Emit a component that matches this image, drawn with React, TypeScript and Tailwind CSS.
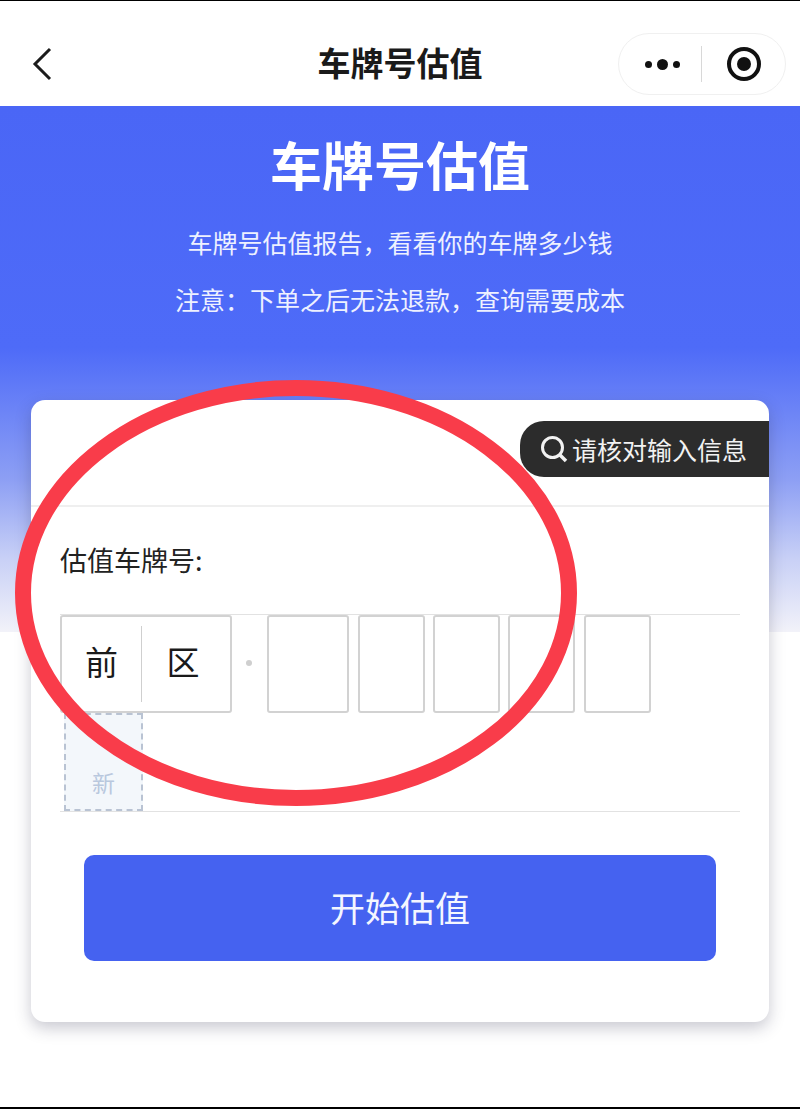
const CJK = "font-['Noto_Sans_CJK_SC','Noto_Sans',sans-serif]";

const PlateBox = ({ width }: { width: string }): JSX.Element => (
  <div className={`h-[98px] shrink-0 rounded-[3px] border-2 border-[#d2d2d2] ${width}`} />
);

const NavBar = (): JSX.Element => (
  <div className="grid h-[105px] shrink-0 grid-cols-[1fr_auto_1fr] items-center bg-white px-[14px] pt-[21px]">
    <svg width="22" height="34" viewBox="0 0 22 34" fill="none" className="ml-[18px]">
      <path d="M18 2 L3 17 L18 32" stroke="#1c1c1c" strokeWidth="3" />
    </svg>
    <h1 className="mb-[3px] text-[33px] font-bold leading-none text-[#1a1a1a]">车牌号估值</h1>
    <div className="flex h-[62px] w-[168px] items-center justify-self-end rounded-full border border-[#f0f0f0] bg-white">
      <div className="flex flex-1 items-center justify-center gap-[5px] pl-1">
        <span className="h-[7px] w-[7px] rounded-full bg-[#111]" />
        <span className="h-[11px] w-[11px] rounded-full bg-[#111]" />
        <span className="h-[7px] w-[7px] rounded-full bg-[#111]" />
      </div>
      <div className="h-[36px] w-px bg-[#d8d8d8]" />
      <div className="flex w-[83px] items-center justify-center">
        <div className="flex h-[34px] w-[34px] items-center justify-center rounded-full border-[4px] border-[#111]">
          <span className="h-[14px] w-[14px] rounded-full bg-[#111]" />
        </div>
      </div>
    </div>
  </div>
);

const Card = (): JSX.Element => (
  <div className="relative mx-[31px] mt-[-232px] flex h-[622px] flex-col rounded-[14px] bg-white shadow-[0_6px_16px_rgba(40,40,70,0.25)]">
    <div className="flex h-[107px] shrink-0 items-start justify-end border-b-2 border-[#efefef] pt-[21px]">
      <div className="flex h-[56px] w-[249px] items-center gap-[4px] rounded-l-[24px] bg-[#2c2c2c] pl-[20px] text-[25px] leading-none text-[#f2f2f2]">
        <svg width="28" height="28" viewBox="0 0 28 28" fill="none">
          <circle cx="12.5" cy="12.5" r="10" stroke="#f2f2f2" strokeWidth="3" />
          <path d="M20 20 L26 26" stroke="#f2f2f2" strokeWidth="3.5" />
        </svg>
        <span>请核对输入信息</span>
      </div>
    </div>
    <div className="mt-[35px] pl-[29px] text-[27px] leading-[36px] text-[#222]">估值车牌号:</div>
    <div className="mx-[29px] mt-[36px] h-[198px] shrink-0 border-y border-[#e2e2e2]">
      <div className="flex items-center">
        <div className="flex h-[98px] w-[172px] shrink-0 items-center rounded-[3px] border-2 border-[#d2d2d2] text-[33px] leading-none text-[#1a1a1a]">
          <span className="flex h-[76px] w-[80px] items-center justify-center border-r border-[#cfcfcf] pb-[6px]">前</span>
          <span className="flex-1 pb-[6px] pr-[6px] text-center">区</span>
        </div>
        <span className="ml-[14px] mr-[15px] mb-[2px] h-[6px] w-[6px] rounded-full bg-[#cfcfcf]" />
        <div className="flex gap-[8px]">
          <PlateBox width="mr-[1px] w-[82px]" />
          <PlateBox width="w-[67px]" />
          <PlateBox width="w-[67px]" />
          <PlateBox width="mr-[1px] w-[67px]" />
          <PlateBox width="w-[67px]" />
        </div>
      </div>
      <div className="ml-1 flex h-[98px] w-[79px] items-end justify-center border-2 border-dashed border-[#b9c3d3] bg-[#f3f7fb] pb-[15px] text-[23px] leading-none text-[#b9c8de]">
        新
      </div>
    </div>
    <button className="mx-[53px] mt-[43px] flex h-[106px] shrink-0 items-center justify-center rounded-[10px] bg-[#4562f0] pb-[4px] text-[35px] leading-none text-[#f4f6ff]">
      开始估值
    </button>
  </div>
);

export default function App(): JSX.Element {
  return (
    <div className={`relative flex h-[1109px] w-[800px] flex-col overflow-hidden border-t border-b-2 border-black bg-white ${CJK}`}>
      <NavBar />
      <div className="flex h-[526px] shrink-0 flex-col items-center bg-[linear-gradient(180deg,#4a66f6_0%,#4e6bf8_46%,#8d9ff4_71%,#c8d0f6_86%,#f2f2f9_100%)] pt-[26px] text-white">
        <h2 className="text-[52px] font-bold leading-[64px]">车牌号估值</h2>
        <p className="mt-[28px] text-[25px] leading-[36px] text-[#eef1ff]">车牌号估值报告，看看你的车牌多少钱</p>
        <p className="mt-[21px] text-[25px] leading-[36px] text-[#eef1ff]">注意：下单之后无法退款，查询需要成本</p>
      </div>
      <Card />
      {/* hand-drawn annotation over the form */}
      <svg className="pointer-events-none absolute left-0 top-0" width="800" height="1109" viewBox="0 0 800 1109" fill="none">
        <ellipse cx="296" cy="592" rx="273" ry="205" stroke="#f93c4a" strokeWidth="16" />
      </svg>
    </div>
  );
}
